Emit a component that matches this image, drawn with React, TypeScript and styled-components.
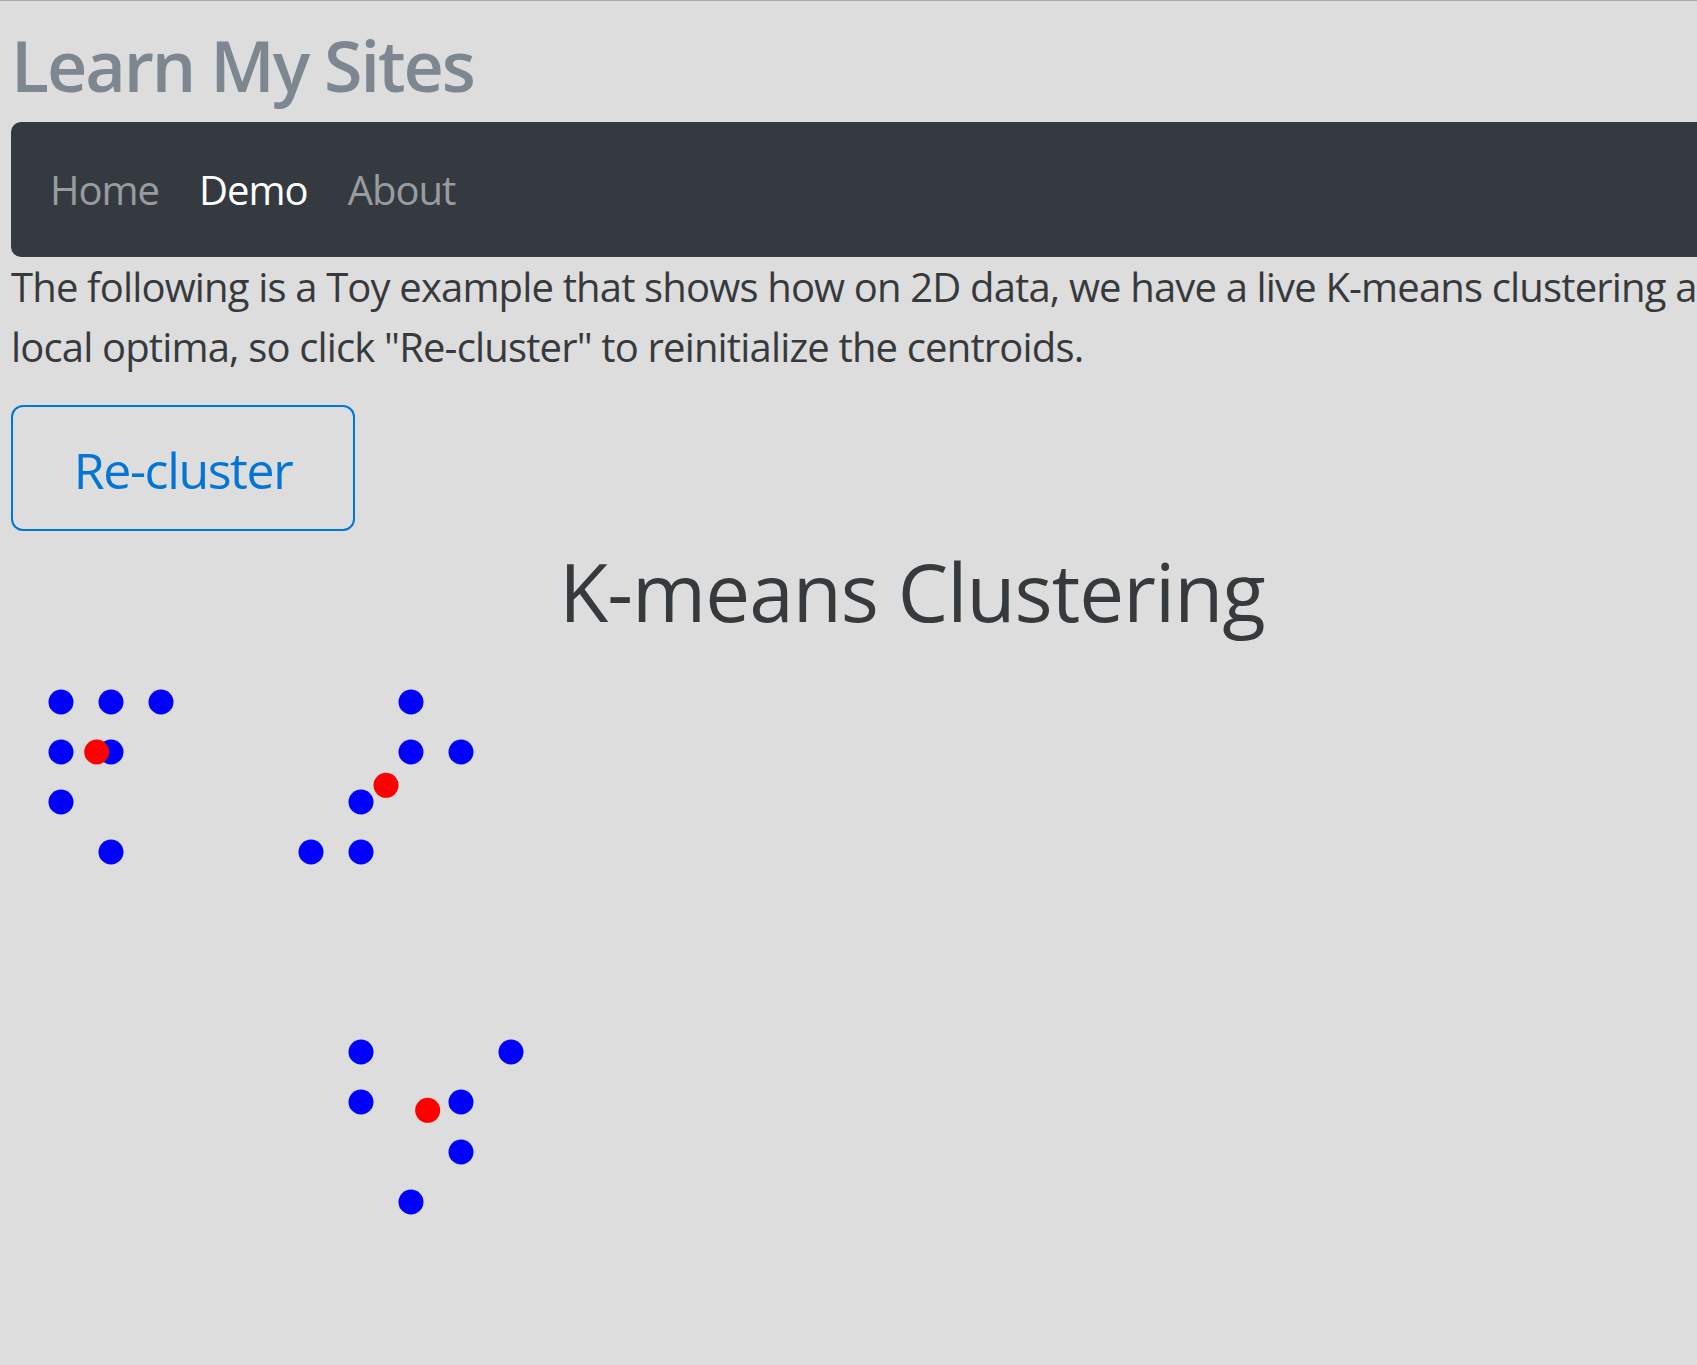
import React, { useMemo, useState } from 'react';
import styled, { createGlobalStyle } from 'styled-components';

const GlobalStyle = createGlobalStyle`
  html, body {
    margin: 0;
    padding: 0;
    background: #dddddd;
    overflow: hidden;
  }
  body {
    font-family: "Open Sans", "Noto Sans", Arial, sans-serif;
    color: #373a3c;
  }
`;

const Page = styled.div`
  border-top: 1px solid #a9a9a9;
  padding-left: 11px;
  min-height: 1364px;
`;

const Content = styled.div`
  width: 1802px;
`;

const SiteTitle = styled.h3`
  margin: 22px 0 15px;
  font-size: 70px;
  line-height: 84px;
  font-weight: 600;
  letter-spacing: -0.03em;
  color: #7e8790;
`;

const Navbar = styled.nav`
  display: flex;
  align-items: center;
  height: 135px;
  padding: 0 19px;
  background: #343a40;
  border-radius: 10px;
`;

const NavLink = styled.a<{ $active?: boolean }>`
  padding: 0 20px;
  font-size: 40px;
  line-height: 60px;
  letter-spacing: -0.025em;
  text-decoration: none;
  color: ${(p) => (p.$active ? '#ffffff' : 'rgba(255, 255, 255, 0.5)')};
  cursor: pointer;
`;

const Intro = styled.p`
  margin: 0 0 28px;
  font-size: 40px;
  line-height: 60px;
  letter-spacing: -0.021em;
  white-space: nowrap;
  color: #373a3c;
`;

const OutlineButton = styled.button`
  display: block;
  width: 344px;
  height: 126px;
  padding: 5px 0 0;
  border: 2.5px solid #0275d8;
  border-radius: 12px;
  background: transparent;
  color: #0275d8;
  font-family: inherit;
  font-size: 50px;
  line-height: 75px;
  letter-spacing: -0.028em;
  cursor: pointer;
`;

const ChartTitle = styled.h2`
  margin: 12px 0 13px;
  text-align: center;
  font-size: 80px;
  line-height: 96px;
  font-weight: 500;
  letter-spacing: -0.012em;
  color: #373a3c;
`;

const Plot = styled.svg`
  display: block;
`;

type Pt = [number, number];

// data on a 20px grid, drawn at 2.5x
const POINTS: Pt[] = [
  [1, 1], [2, 1], [3, 1], [1, 2], [2, 2], [1, 3], [2, 4],
  [8, 1], [8, 2], [9, 2], [7, 3], [6, 4], [7, 4],
  [7, 8], [10, 8], [7, 9], [9, 9], [9, 10], [8, 11],
];

const START: Pt[] = [[1, 1], [8, 1], [8, 11]];
const SCALE = 50;
const R = 12.5;

function kmeans(points: Pt[], init: Pt[]): Pt[] {
  let cents = init.map((c) => [...c] as Pt);
  for (let it = 0; it < 20; it++) {
    const groups: Pt[][] = cents.map(() => []);
    points.forEach((p) => {
      let best = 0;
      let bd = Infinity;
      cents.forEach((c, i) => {
        const d = (p[0] - c[0]) ** 2 + (p[1] - c[1]) ** 2;
        if (d < bd) {
          bd = d;
          best = i;
        }
      });
      groups[best].push(p);
    });
    cents = groups.map((g, i) =>
      g.length
        ? ([g.reduce((s, p) => s + p[0], 0) / g.length, g.reduce((s, p) => s + p[1], 0) / g.length] as Pt)
        : cents[i]
    );
  }
  return cents;
}

export default function App() {
  const [init, setInit] = useState<Pt[]>(START);
  const centroids = useMemo(() => kmeans(POINTS, init), [init]);

  const recluster = () => {
    const picks = [...POINTS].sort(() => Math.random() - 0.5).slice(0, 3);
    setInit(picks);
  };

  return (
    <>
      <GlobalStyle />
      <Page>
        <Content>
          <SiteTitle>Learn My Sites</SiteTitle>
          <Navbar>
            <NavLink>Home</NavLink>
            <NavLink $active>Demo</NavLink>
            <NavLink>About</NavLink>
          </Navbar>
          <Intro>
            The following is a Toy example that shows how on 2D data, we have a live K-means clustering algorithm. It may get stuck in
            <br />
            local optima, so click "Re-cluster" to reinitialize the centroids.
          </Intro>
          <OutlineButton onClick={recluster}>Re-cluster</OutlineButton>
          <ChartTitle>K-means Clustering</ChartTitle>
          <Plot width={560} height={640} viewBox="0 0 560 640">
            <defs>
              <filter id="soft" x="-20%" y="-20%" width="140%" height="140%">
                <feGaussianBlur stdDeviation="0.6" />
              </filter>
            </defs>
            <g filter="url(#soft)">
              {POINTS.map(([x, y], i) => (
                <circle key={i} cx={x * SCALE} cy={y * SCALE} r={R} fill="#0000ff" />
              ))}
              {centroids.map(([x, y], i) => (
                <circle key={`c${i}`} cx={x * SCALE} cy={y * SCALE} r={R} fill="#ff0000" />
              ))}
            </g>
          </Plot>
        </Content>
      </Page>
    </>
  );
}
